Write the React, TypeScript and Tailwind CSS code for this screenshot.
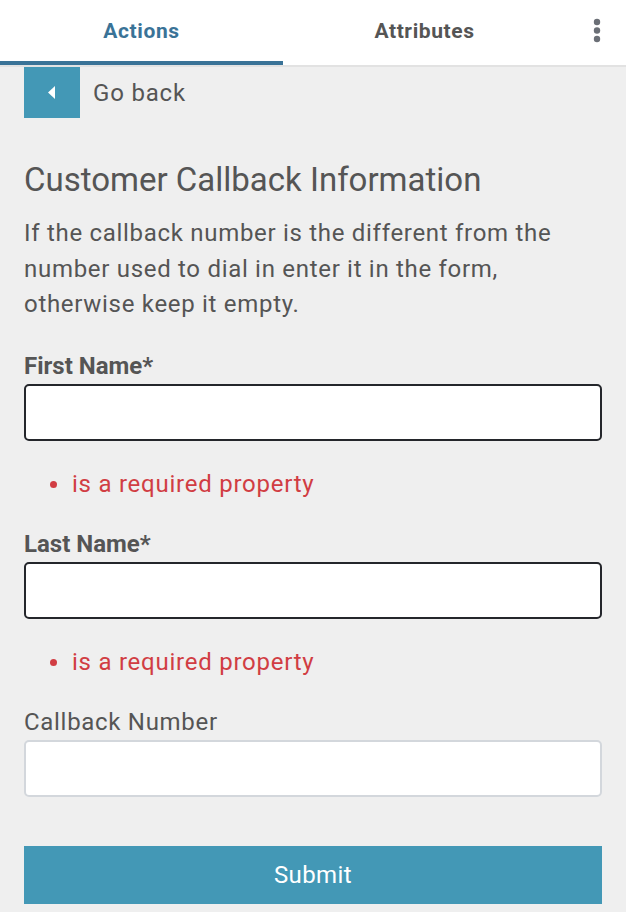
const fields = [
  { label: "First Name*", required: true },
  { label: "Last Name*", required: true },
  { label: "Callback Number", required: false },
];

function Kebab() {
  return (
    <svg width="8" height="26" viewBox="0 0 8 26" fill="#6b6f76">
      <circle cx="4" cy="4" r="3.2" />
      <circle cx="4" cy="12.5" r="3.2" />
      <circle cx="4" cy="21" r="3.2" />
    </svg>
  );
}

export default function App() {
  return (
    <div className="min-h-[912px] bg-[#efefef] font-['Roboto',sans-serif] text-[#555]">
      <div className="flex h-[65px] bg-white border-b-2 border-[#e2e2e2] box-content">
        <div className="w-[283px] flex items-center justify-center border-b-[4px] border-[#3a7397] pt-[3px]">
          <span className="text-[21px] font-bold tracking-[0.6px] text-[#3a7397]">Actions</span>
        </div>
        <div className="w-[283px] flex items-center justify-center pb-[4px] pt-[3px]">
          <span className="text-[21px] font-bold tracking-[0.6px] text-[#555]">Attributes</span>
        </div>
        <div className="flex-1 flex items-center justify-center pl-[2px] pb-[4px]">
          <Kebab />
        </div>
      </div>

      <div className="px-[24px]">
        <div className="flex items-center">
          <button className="w-[56px] h-[51px] bg-[#4398b6] flex items-center justify-center">
            <svg width="8" height="13" viewBox="0 0 8 13" fill="white">
              <polygon points="7,0 7,13 0,6.5" />
            </svg>
          </button>
          <span className="ml-[13px] text-[24px] tracking-[0.8px]">Go back</span>
        </div>

        <h1 className="mt-[44px] text-[33px] leading-[36px]">Customer Callback Information</h1>
        <p className="mt-[18px] text-[24px] leading-[35.5px] tracking-[0.7px]">
          If the callback number is the different from the number used to dial in enter it in the
          form, otherwise keep it empty.
        </p>

        <form className="mt-[27px]" onSubmit={(e) => e.preventDefault()}>
          {fields.map((f, i) => (
            <div key={f.label} className={i < fields.length - 1 ? "mb-[27px]" : ""}>
              <label
                className={`block text-[24px] leading-[33px] ${
                  f.required ? "font-bold" : "tracking-[0.7px]"
                }`}
              >
                {f.label}
              </label>
              <input
                type="text"
                className={`mt-[1px] block w-full h-[57px] bg-white rounded-[5px] border-2 outline-none ${
                  f.required ? "border-[#24262b]" : "border-[#d3d7dc]"
                }`}
              />
              {f.required && (
                <div className="mt-[27px] flex items-center text-[24px] leading-[33px] tracking-[0.75px] text-[#d13d43]">
                  <span className="ml-[26px] w-[7px] h-[7px] rounded-full bg-[#d13d43]" />
                  <span className="ml-[15px]">is a required property</span>
                </div>
              )}
            </div>
          ))}
          <button
            type="submit"
            className="mt-[49px] w-full h-[58px] bg-[#4398b6] text-white text-[24px] tracking-[0.4px]"
          >
            Submit
          </button>
        </form>
      </div>
    </div>
  );
}
